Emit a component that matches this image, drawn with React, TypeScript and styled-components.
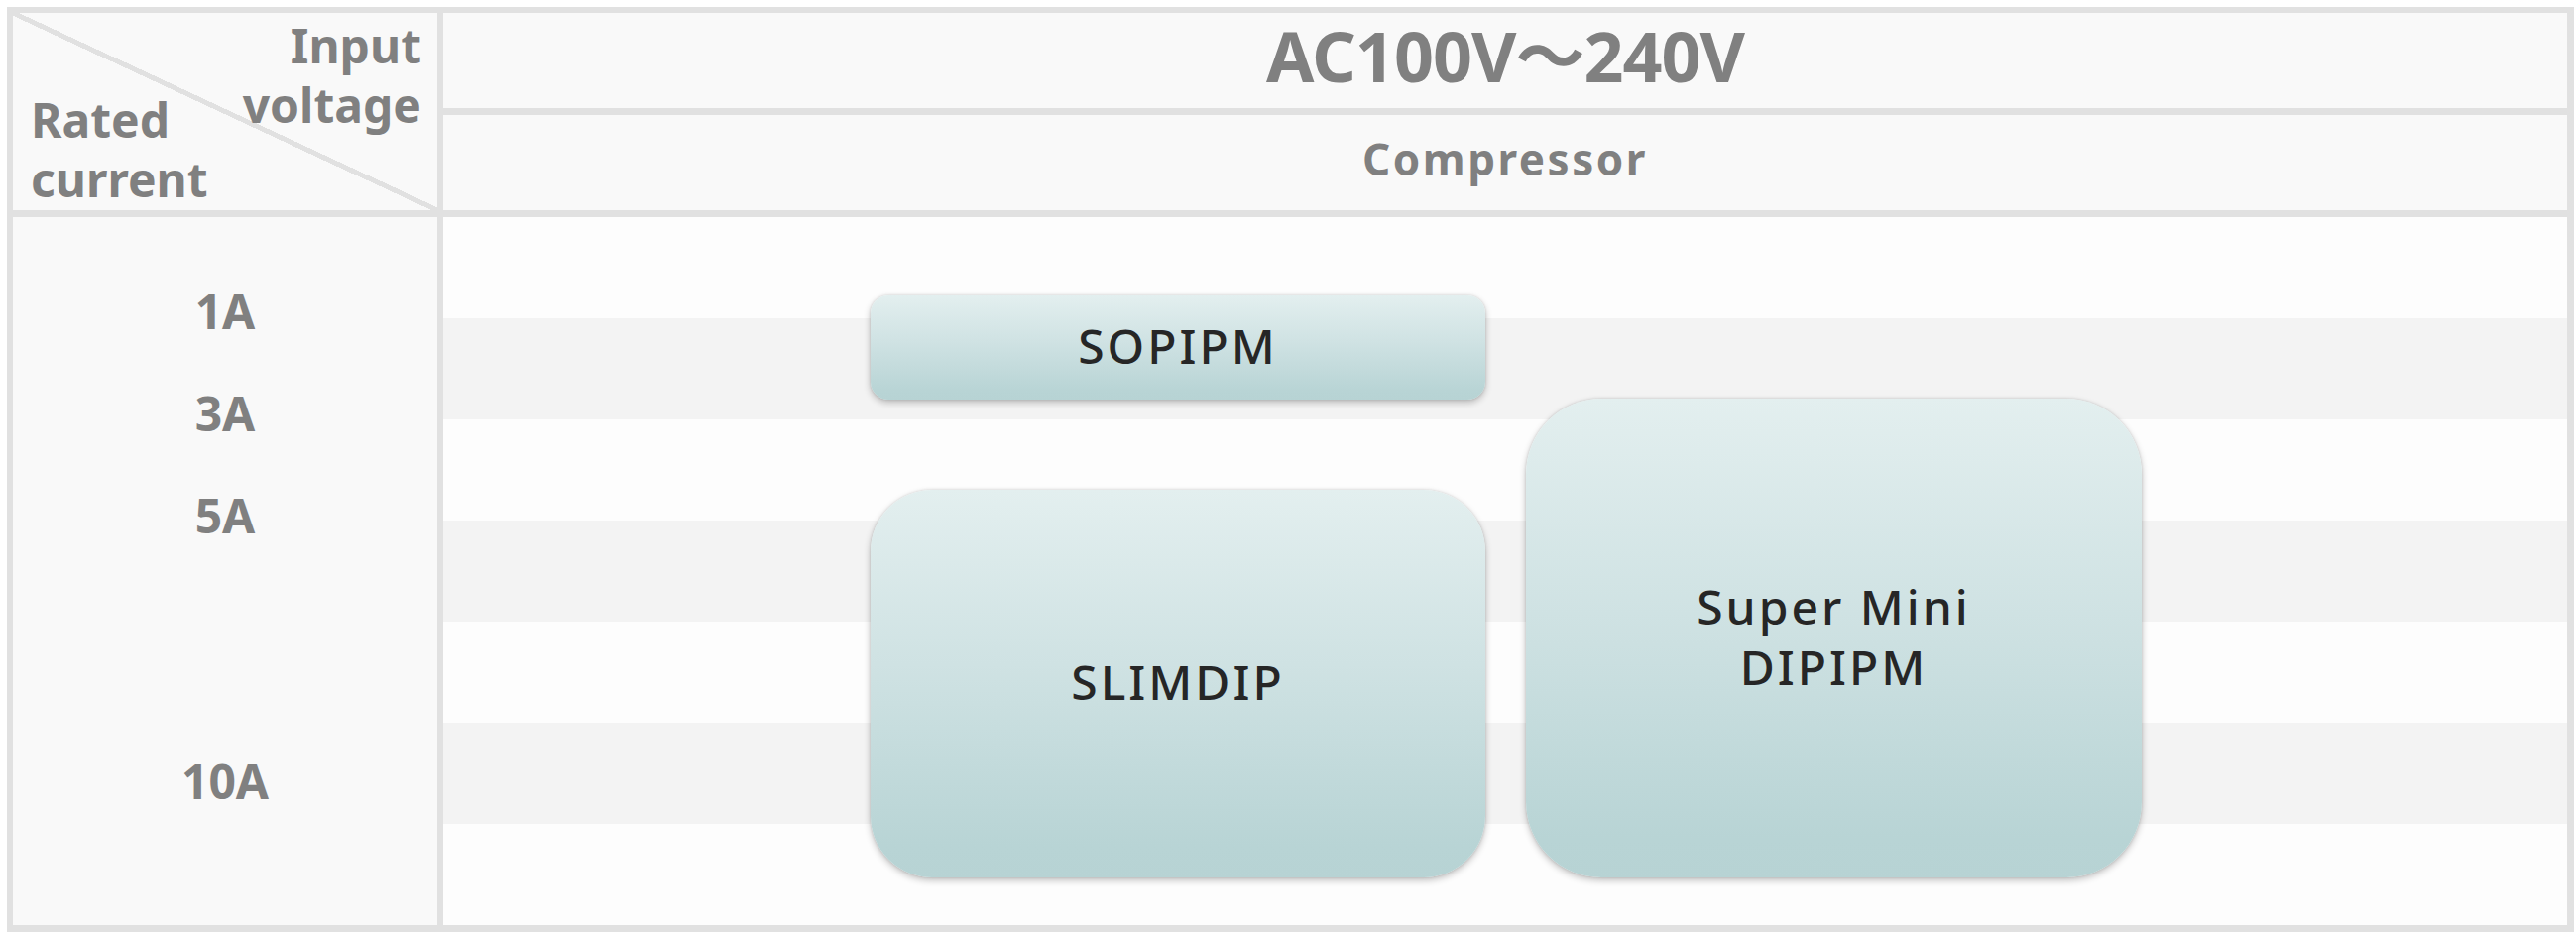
import React from "react";
import styled, { createGlobalStyle } from "styled-components";

const GlobalStyle = createGlobalStyle`
  html, body {
    margin: 0;
    padding: 0;
    background: #ffffff;
  }
  body {
    font-family: "Noto Sans", "Noto Sans CJK JP", sans-serif;
  }
`;

const Page = styled.div`
  padding: 7px 0 0 7px;
`;

const Table = styled.div`
  box-sizing: border-box;
  width: 2589px;
  height: 933px;
  border-style: solid;
  border-color: #e1e1e1;
  border-width: 6px 7px 7px 6px;
  background: #e1e1e1;
  display: grid;
  grid-template-columns: 428px 1fr;
  grid-template-rows: 96px 96px 1fr;
  column-gap: 6px;
  row-gap: 7px;
`;

const CornerCell = styled.div`
  grid-row: 1 / 3;
  grid-column: 1;
  min-height: 0;
  background:
    linear-gradient(
      to top right,
      transparent calc(50% - 2.5px),
      #e1e1e1 calc(50% - 2.5px),
      #e1e1e1 calc(50% + 2.5px),
      transparent calc(50% + 2.5px)
    ),
    #f9f9f9;
  display: grid;
  grid-template-columns: 1fr;
  grid-template-rows: 1fr;
  padding: 3px 16px 1px 18px;
  box-sizing: border-box;
  overflow: hidden;
`;

const CornerText = styled.div<{ $align: "left" | "right" }>`
  grid-area: 1 / 1;
  align-self: ${(p) => (p.$align === "right" ? "start" : "end")};
  font-size: 48px;
  line-height: 60px;
  font-weight: 700;
  color: #808080;
  text-align: ${(p) => p.$align};
`;

const HeaderCell = styled.div<{ $size: number; $pad: number; $spacing: number }>`
  background: #f9f9f9;
  display: flex;
  justify-content: center;
  align-items: flex-start;
  padding-top: ${(p) => p.$pad}px;
  box-sizing: border-box;
  font-size: ${(p) => p.$size}px;
  line-height: ${(p) => p.$size}px;
  letter-spacing: ${(p) => p.$spacing}px;
  font-weight: 700;
  color: #808080;
  white-space: nowrap;
`;

const LabelColumn = styled.div`
  background: #f9f9f9;
  display: flex;
  flex-direction: column;
  align-items: center;
`;

const CurrentLabel = styled.div<{ $gap: number }>`
  margin-top: ${(p) => p.$gap}px;
  font-size: 48px;
  line-height: 60px;
  height: 60px;
  font-weight: 700;
  color: #808080;
`;

const ChartArea = styled.div`
  position: relative;
  background: #fdfdfd;
  display: grid;
  grid-template-rows: repeat(7, 1fr);
`;

const Stripe = styled.div<{ $shade: boolean }>`
  background: ${(p) => (p.$shade ? "#f3f3f3" : "#fdfdfd")};
`;

const ChartOverlay = styled.div`
  position: absolute;
  inset: 0;
  display: grid;
  grid-template-columns: 431px 620px 41px 621px 1fr;
  grid-template-rows: 79px 104px 92px 391px 1fr;
`;

const Module = styled.div<{ $col: string; $row: string; $radius: number; $height?: number }>`
  grid-column: ${(p) => p.$col};
  grid-row: ${(p) => p.$row};
  ${(p) => (p.$height ? `height: ${p.$height}px; align-self: start;` : "")}
  border-radius: ${(p) => p.$radius}px;
  background: linear-gradient(to bottom, #e3efef 0%, #cfe2e3 45%, #b8d4d5 92%, #b7d3d4 100%);
  box-shadow: 0 3px 7px rgba(0, 0, 0, 0.24), 0 0 3px rgba(0, 0, 0, 0.14);
  display: flex;
  align-items: center;
  justify-content: center;
  text-align: center;
  font-size: 48px;
  line-height: 61px;
  font-weight: 500;
  letter-spacing: 3px;
  color: #262626;
  padding-bottom: 4px;
  box-sizing: border-box;
`;

const stripes = [false, true, false, true, false, true, false];

const labels = [
  { text: "1A", gap: 65 },
  { text: "3A", gap: 43 },
  { text: "5A", gap: 43 },
  { text: "10A", gap: 208 },
];

export default function App() {
  return (
    <>
      <GlobalStyle />
      <Page>
        <Table>
          <CornerCell>
            <CornerText $align="right">
              Input
              <br />
              voltage
            </CornerText>
            <CornerText $align="left">
              Rated
              <br />
              current
            </CornerText>
          </CornerCell>
          <HeaderCell $size={70} $pad={8} $spacing={-1}>
            AC100V～240V
          </HeaderCell>
          <HeaderCell $size={44} $pad={22} $spacing={2.5}>
            Compressor
          </HeaderCell>
          <LabelColumn>
            {labels.map((l) => (
              <CurrentLabel key={l.text} $gap={l.gap}>
                {l.text}
              </CurrentLabel>
            ))}
          </LabelColumn>
          <ChartArea>
            {stripes.map((s, i) => (
              <Stripe key={i} $shade={s} />
            ))}
            <ChartOverlay>
              <Module $col="2" $row="2" $radius={18} $height={105}>
                SOPIPM
              </Module>
              <Module $col="2" $row="4" $radius={62}>
                SLIMDIP
              </Module>
              <Module $col="4" $row="3 / 5" $radius={76}>
                Super Mini
                <br />
                DIPIPM
              </Module>
            </ChartOverlay>
          </ChartArea>
        </Table>
      </Page>
    </>
  );
}
